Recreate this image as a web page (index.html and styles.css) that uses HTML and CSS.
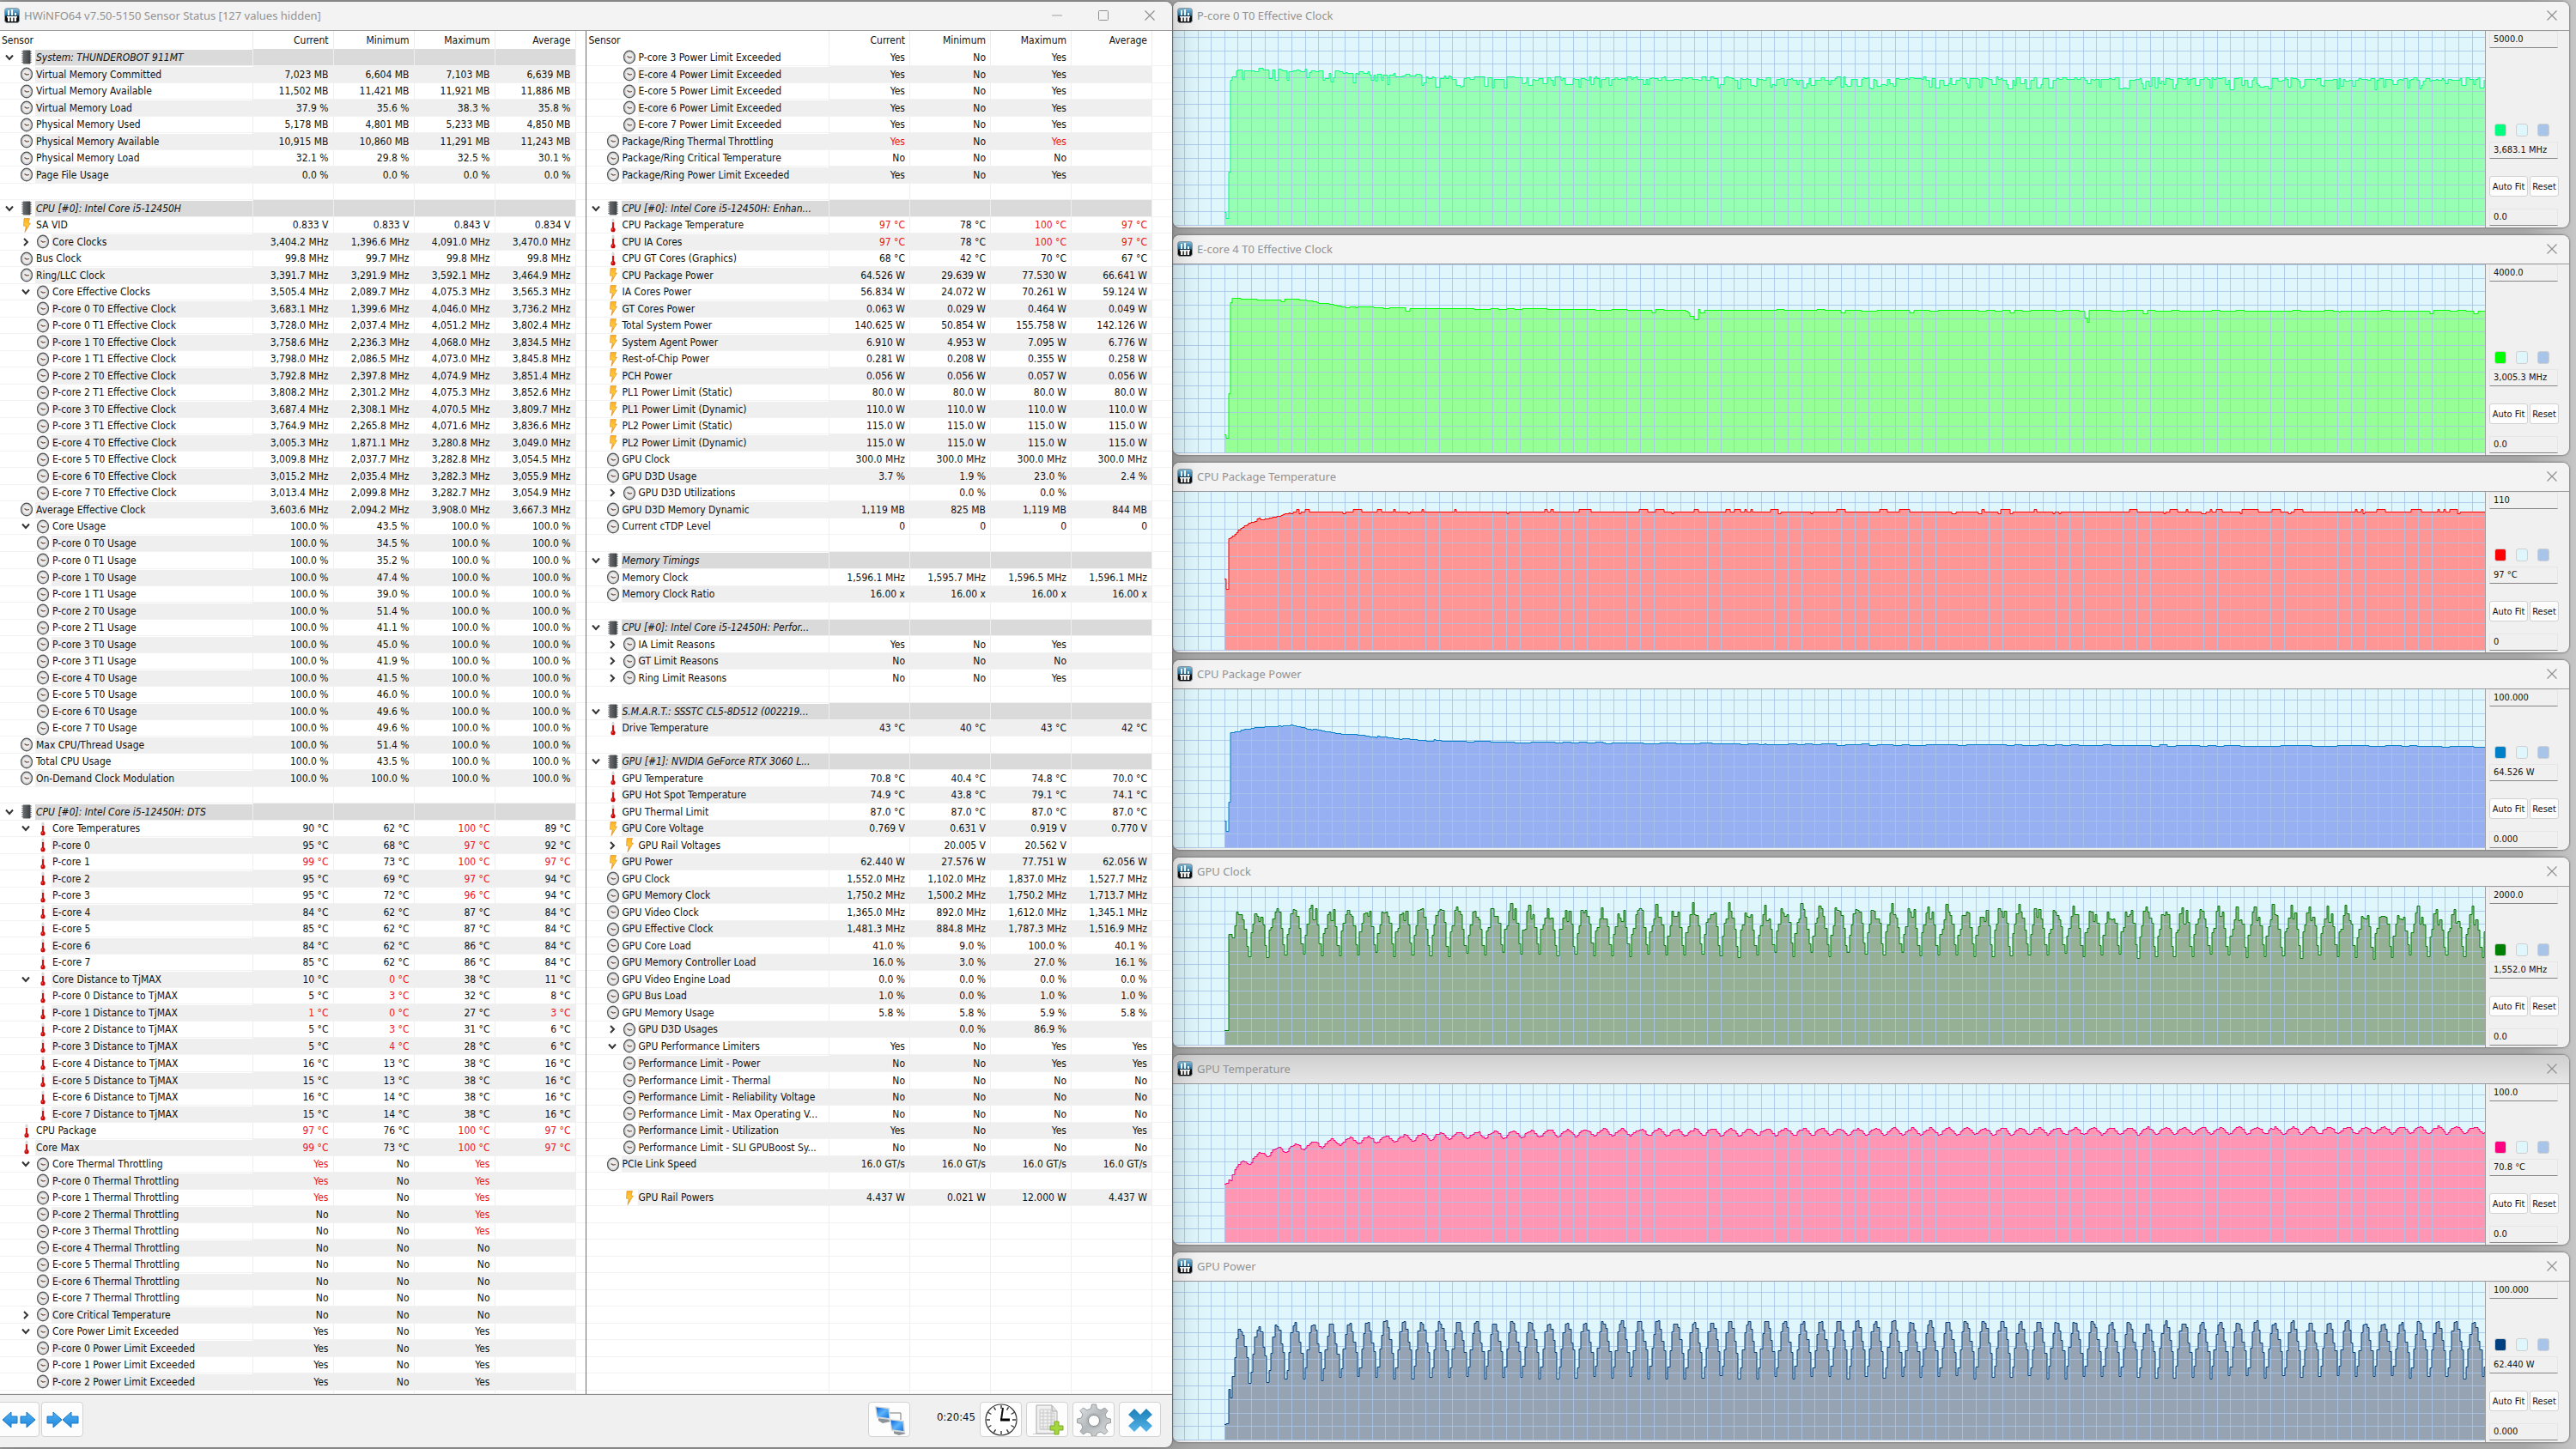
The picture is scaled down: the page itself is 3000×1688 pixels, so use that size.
FILE: index.html
```html
<!DOCTYPE html>
<html lang="en">
<head>
<meta charset="utf-8">
<title>HWiNFO64 Sensor Status</title>
<link rel="stylesheet" href="styles.css">
</head>
<body>
<svg class="defs" aria-hidden="true">
  <defs>
    <linearGradient id="gBlue" x1="0" y1="0" x2="0" y2="1"><stop offset="0" stop-color="#8cc4e0"/><stop offset=".5" stop-color="#1a6fa5"/><stop offset=".55" stop-color="#111"/><stop offset="1" stop-color="#000"/></linearGradient>
    <linearGradient id="gBolt" x1="0" y1="0" x2="0" y2="1"><stop offset="0" stop-color="#ffb020"/><stop offset=".5" stop-color="#ffc93a"/><stop offset="1" stop-color="#f08a10"/></linearGradient>
    <linearGradient id="gArrow" x1="0" y1="0" x2="0" y2="1"><stop offset="0" stop-color="#4fb0f2"/><stop offset="1" stop-color="#1f86dc"/></linearGradient>
    <linearGradient id="gScreen" x1="0" y1="0" x2="1" y2="1"><stop offset="0" stop-color="#0a62d8"/><stop offset=".5" stop-color="#5db4fa"/><stop offset="1" stop-color="#1273e0"/></linearGradient>
    <linearGradient id="gGear" x1="0" y1="0" x2="1" y2="1"><stop offset="0" stop-color="#e2e5e6"/><stop offset=".5" stop-color="#b4b9bb"/><stop offset="1" stop-color="#d9dcdd"/></linearGradient>
    <linearGradient id="gCross" x1="0" y1="0" x2="0" y2="1"><stop offset="0" stop-color="#1c7fb8"/><stop offset="1" stop-color="#56b4e8"/></linearGradient>
    <linearGradient id="gChip" x1="0" y1="0" x2="1" y2="0"><stop offset="0" stop-color="#6a6e70"/><stop offset="1" stop-color="#3c4042"/></linearGradient>
  </defs>
  <symbol id="app" viewBox="0 0 18 18"><rect x=".5" y=".5" width="17" height="17" rx="3" fill="url(#gBlue)" stroke="#8a98a0"/><path d="M4 3h2v6H4zM8 2h2v7H8zM12 6h2v3h-2z" fill="#fff"/><path d="M4 11h2.500v5H4zM7.800 11h2.500v5H7.800zM11.600 11h2.500v5h-2.500zM3 10h12v1.500H3z" fill="#fff"/></symbol>
  <symbol id="clock" viewBox="0 0 16 16"><ellipse cx="8" cy="8" rx="6.400" ry="7.200" fill="#ececec" stroke="#55585a" stroke-width="1.400"/><ellipse cx="8" cy="8" rx="4.900" ry="5.700" fill="none" stroke="#c8c8c8"/><path d="M5.500 7l2.500 1.500L11 8" fill="none" stroke="#6a4a3a" stroke-width="1.200"/></symbol>
  <symbol id="chip" viewBox="0 0 16 16"><path d="M2 1.500h12M2 4h12M2 6.500h12M2 9h12M2 11.500h12M2 14h12" stroke="#8a8d8f"/><rect x="3.500" y="0" width="9" height="16" rx="1" fill="url(#gChip)"/></symbol>
  <symbol id="thermo" viewBox="0 0 16 16"><path d="M8 1.500v10" stroke="#d8d8d8" stroke-width="3" stroke-linecap="round"/><path d="M8 4.500v8" stroke="#d41414" stroke-width="2"/><circle cx="8" cy="13.200" r="2.600" fill="#c80c0c"/><circle cx="7.300" cy="12.500" r=".7" fill="#f08080"/></symbol>
  <symbol id="bolt" viewBox="0 0 16 16"><path d="M5 0h6.500L10 5.500h2.500L6 16l1.300-7.300H4.500z" fill="url(#gBolt)" stroke="#d88a20" stroke-width=".6"/></symbol>
  <symbol id="down" viewBox="0 0 10 10"><path d="M1 2.500l4 4.500 4-4.500" fill="none" stroke="#333" stroke-width="2"/></symbol>
  <symbol id="right" viewBox="0 0 10 10"><path d="M3 1l4 4-4 4" fill="none" stroke="#333" stroke-width="2"/></symbol>
  <symbol id="close" viewBox="0 0 12 12"><path d="M.5 .5l11 11M11.500 .5l-11 11" stroke="#909090" stroke-width="1.200"/></symbol>
</svg>
<div class="desktop">
  <main class="window sensors">
    <header class="titlebar">
      <svg class="app-icon" aria-hidden="true"><use href="#app"/></svg>
      <h1 class="title">HWiNFO64 v7.50-5150 Sensor Status [127 values hidden]</h1>
      <div class="window-controls">
        <button class="control" aria-label="Minimize"><svg viewBox="0 0 12 12"><path d="M0 6h12" stroke="#a0a0a0"/></svg></button>
        <button class="control" aria-label="Maximize"><svg viewBox="0 0 12 12"><rect x=".5" y=".5" width="11" height="11" rx="1" fill="none" stroke="#909090"/></svg></button>
        <button class="control" aria-label="Close"><svg><use href="#close"/></svg></button>
      </div>
    </header>
    <div class="panes">
      <table class="readings">
        <colgroup><col><col class="value-col"><col class="value-col"><col class="value-col"><col class="value-col"><col class="edge-col"></colgroup>
        <thead><tr><th scope="col">Sensor</th><th scope="col">Current</th><th scope="col">Minimum</th><th scope="col">Maximum</th><th scope="col">Average</th><td></td></tr></thead>
        <tbody id="left-rows"></tbody>
      </table>
      <table class="readings">
        <colgroup><col><col class="value-col"><col class="value-col"><col class="value-col"><col class="value-col"><col class="edge-col edge-col-wide"></colgroup>
        <thead><tr><th scope="col">Sensor</th><th scope="col">Current</th><th scope="col">Minimum</th><th scope="col">Maximum</th><th scope="col">Average</th><td></td></tr></thead>
        <tbody id="right-rows"></tbody>
      </table>
    </div>
    <footer class="toolbar">
      <div class="tool-group tool-group-start">
        <button class="tool" aria-label="Expand columns"><svg viewBox="0 0 40 36"><path d="M1 18l10-9v5h7v8h-7v5zM39 18l-10-9v5h-7v8h7v5z" fill="url(#gArrow)" stroke="#1c78c4"/></svg></button>
        <button class="tool" aria-label="Shrink columns"><svg viewBox="0 0 40 36"><path d="M19 18l-10-9v5H2v8h7v5zM20 18l10-9v5h8v8h-8v5z" fill="url(#gArrow)" stroke="#1c78c4"/></svg></button>
      </div>
      <div class="tool-group">
        <button class="tool tool-network" aria-label="Remote sensors"><svg viewBox="0 0 40 36"><path d="M20 10h13v8" fill="none" stroke="#777"/><path d="M7 16l11 1 3 3-9 2-5-3z" fill="#8d9499"/><path d="M3 2l17 2 1 14-16-2z" fill="#d4d8da"/><path d="M4.500 3.500l14 1.700.8 10.800-13.300-1.700z" fill="url(#gScreen)"/><path d="M25 31l10 1 4 2-8 2-6-2z" fill="#8d9499"/><path d="M20 17l17 2 1 14-16-2z" fill="#d4d8da"/><path d="M21.500 18.500l14 1.700.8 10.800-13.300-1.700z" fill="url(#gScreen)"/></svg></button>
        <time class="elapsed">0:20:45</time>
        <button class="tool" aria-label="Reset clock"><svg viewBox="0 0 40 38"><circle cx="20" cy="19" r="18" fill="#fff" stroke="#333" stroke-width="1.200"/><path d="M20 2v4M20 32v4M3 19h4M33 19h4M28.500 4.300l-2 3.400M35 10.500l-3.400 2M35 27.500l-3.400-2M28.500 33.700l-2-3.400M11.500 33.700l2-3.400M5 27.500l3.400-2M5 10.500l3.400 2M11.500 4.300l2 3.400" stroke="#333" stroke-width="1.400"/><path d="M20 19l2-14" stroke="#111" stroke-width="2"/><path d="M19 19h11" stroke="#000" stroke-width="3"/></svg></button>
        <button class="tool" aria-label="Log to file"><svg viewBox="0 0 40 38"><path d="M3 35h30v1H3z" fill="#ccc"/><path d="M7 2h18l6 7v26H7z" fill="#f0f0f0" stroke="#aaa"/><path d="M25 2v7h6" fill="#ddd" stroke="#aaa"/><path d="M11 7h13v23H11zM11 11h17v19H11M11 15h17M11 19h17M11 23h17M11 27h17M15 7v23M20 7v23M25 11v19" fill="none" stroke="#c9c9c9"/><path d="M28 21h5v5h5v5h-5v5h-5v-5h-5v-5h5z" fill="#a4d63e" stroke="#7dac22"/></svg></button>
        <button class="tool" aria-label="Settings"><svg viewBox="0 0 40 38"><path d="M17.500 1h5l1 5 4.500 1.800L32.500 5 36 8.500 33 13l1.800 4 4.700 1v4.500l-4.700 1L33 28l3 4.500-3.500 3.500-4.500-3-4.500 1.500-1 3.500h-5l-1-3.500L12 33l-4.500 3L4 32.500 7 28l-1.800-4.500-4.700-1V18l4.700-1L7 13 4 8.500 7.500 5 12 7.800 16.500 6z" fill="url(#gGear)" stroke="#989c9e"/><circle cx="20" cy="20" r="9" fill="#b0b4b6"/><circle cx="20" cy="20" r="6.500" fill="#fff" stroke="#84888a"/></svg></button>
        <button class="tool" aria-label="Close sensors"><svg viewBox="0 0 40 38"><path d="M13 6l7 7 7-7 7 7-7 6.500 7 6.500-7 7-7-7-7 7-7-7 7-6.500L6 13z" fill="url(#gCross)"/></svg></button>
      </div>
    </footer>
  </main>
  <div class="graphs" id="graphs"></div>
</div>
<script src="sensors.js"></script>
</body>
</html>
```
FILE: styles.css
```css
* { box-sizing: border-box; }

body {
  margin: 0;
  background: linear-gradient(90deg, #a6a6a6 98%, #c6c6c6);
  color: #111;
  font-family: "DejaVu Sans Condensed", Tahoma, sans-serif;
  font-size: 12px;
}

button, input { font: inherit; color: inherit; margin: 0; padding: 0; }
.defs { position: absolute; width: 0; height: 0; }

.desktop {
  display: grid;
  grid-template-columns: 1366fr 1625fr;
  gap: 1px;
  min-height: 100vh;
  padding: 2px 8px 2px 0;
}

.window {
  display: flex;
  flex-direction: column;
  overflow: hidden;
  border-radius: 0 8px 8px 8px;
  background: #f0f0f0;
}
.sensors {
  position: relative;
  z-index: 1;
  border-radius: 0 8px 8px 0;
  box-shadow: 0 0 3px #555, 0 0 36px rgba(0, 0, 0, .25);
}

.titlebar {
  display: flex;
  align-items: center;
  flex: none;
  height: 34px;
  padding: 0 20px 2px 5px;
  border-bottom: 1px solid #9a9a9e;
  background: #f3f3f3;
}
.app-icon { width: 18px; height: 18px; }
.title {
  flex: 1;
  margin: 0 0 0 5px;
  color: #929292;
  font: 400 13px/20px "Noto Sans", "Segoe UI", sans-serif;
}
.window-controls { display: flex; gap: 42px; }
.control { width: 12px; height: 12px; border: 0; background: none; display: flex; }
.control svg { width: 12px; height: 12px; }

.panes {
  display: grid;
  grid-template-columns: 682fr 684fr;
  flex: 1;
  align-items: start;
  background: #fff;
}
.readings {
  width: 100%;
  table-layout: fixed;
  border-collapse: separate;
  border-spacing: 0;
  line-height: 18px;
  white-space: nowrap;
}
.readings + .readings { border-left: 1px solid #6e6e6e; }
.value-col { width: 94px; }
.edge-col { width: 11px; }
.edge-col-wide { width: 23px; }
.readings th {
  height: 21px;
  padding: 1px 5px 0 0;
  border-right: 1px solid #ececec;
  font-weight: 400;
  text-align: right;
}
.readings th:first-child { padding-left: 2px; text-align: left; }
.readings thead td { padding: 0; }
.readings + .readings th:first-child { padding-left: 3px; }

.readings tbody tr { height: 19px; }
.readings tbody tr:nth-child(2n), .readings tbody tr:nth-child(30n+1) { height: 20px; }
.readings tbody tr.stub { height: 4px; }
.readings tbody td {
  padding: 0 5px 0 0;
  border-right: 1px solid #efefef;
  border-bottom: 1px solid #f2f2f2;
  text-align: right;
}
.readings tbody td:last-child { border-right: 0; }
.readings tbody .name-cell { padding: 0; text-align: left; }
.name { display: flex; align-items: center; height: 18px; }
.name-nested { padding-left: 19px; }
.toggle, .toggle-space { flex: none; width: 23px; padding-left: 6px; }
.toggle { border: 0; background: none; display: flex; }
.toggle svg { width: 10px; height: 10px; }
.kind { flex: none; width: 16px; height: 17px; margin-right: 2px; }
.label { flex: 1; height: 100%; padding-left: 1px; }
.shaded .label, .shaded .value { background: #efefef; }
.group .label, .group .value { background: #dadada; }
.group .label { font-style: italic; }
.hot { color: #f01414; }

.toolbar {
  display: flex;
  justify-content: space-between;
  flex: none;
  height: 62px;
  padding: 8px 13px 0 0;
  border-top: 1px solid #8c8c8c;
}
.tool-group { display: flex; gap: 5px; }
.tool-group-start { gap: 2px; margin-left: -3px; }
.tool {
  display: flex;
  justify-content: center;
  align-items: center;
  width: 49px;
  height: 41px;
  border: 1px solid #d2d2d2;
  border-radius: 4px;
  background: #fdfdfd;
}
.tool svg { width: 40px; height: 38px; }
.tool-network { margin-right: 24px; }
.elapsed { width: 47px; font-size: 13px; line-height: 35px; text-align: right; }

.graphs { display: flex; flex-direction: column; gap: 9px; }
.graph { border-radius: 8px; box-shadow: 0 0 2px 1px #808080; }
.graph .titlebar { padding-right: 14px; }
.graph-body { display: flex; height: 187px; }
.graph-tall .graph-body { height: 229px; }
.graph-medium .graph-body { height: 222px; }
.graph-dim .titlebar { background: linear-gradient(#cfcfcf, #e6e6e6); }
.plot { flex: 1; min-width: 0; height: 100%; border-right: 1px solid #a0a0a0; }
.plot-back { fill: #dff6fd; }
.plot-grid { fill: none; stroke: #a8c4e8; stroke-width: 1; opacity: .85; }
.plot-line { fill: none; stroke-width: 1; }

.scale {
  display: flex;
  flex-direction: column;
  flex: none;
  width: 97px;
  padding: 0 11px 2px 4px;
  font-size: 11px;
}
.field {
  width: 80px;
  height: 20px;
  padding: 0 0 2px 4px;
  border: 1px solid #e6e6e6;
  border-bottom: 1px solid #868686;
  background: #f0f0f0;
}
.swatches { display: flex; gap: 11px; margin: auto 0 6px 6px; }
.swatch { width: 14px; height: 15px; border: 1px solid #d0d0d0; border-radius: 3px; }
.fit-row { display: flex; gap: 2px; margin: 20px 0 14px; }
.fit { width: 45px; height: 24px; border: 1px solid #d2d2d2; border-radius: 3px; background: #fdfdfd; }
.fit-reset { width: 34px; }
```
FILE: sensors.js
```js
// Row format: level, icon, toggle, then name|current|minimum|maximum|average.
// A "!" before a value marks it as out of range.
const KINDS = { c: 'clock', t: 'thermo', b: 'bolt', h: 'chip' };
const LEFT = `
0hv System: THUNDEROBOT 911MT
0c- Virtual Memory Committed|7,023 MB|6,604 MB|7,103 MB|6,639 MB
0c- Virtual Memory Available|11,502 MB|11,421 MB|11,921 MB|11,886 MB
0c- Virtual Memory Load|37.9 %|35.6 %|38.3 %|35.8 %
0c- Physical Memory Used|5,178 MB|4,801 MB|5,233 MB|4,850 MB
0c- Physical Memory Available|10,915 MB|10,860 MB|11,291 MB|11,243 MB
0c- Physical Memory Load|32.1 %|29.8 %|32.5 %|30.1 %
0c- Page File Usage|0.0 %|0.0 %|0.0 %|0.0 %
~
0hv CPU [#0]: Intel Core i5-12450H
0b- SA VID|0.833 V|0.833 V|0.843 V|0.834 V
1c> Core Clocks|3,404.2 MHz|1,396.6 MHz|4,091.0 MHz|3,470.0 MHz
0c- Bus Clock|99.8 MHz|99.7 MHz|99.8 MHz|99.8 MHz
0c- Ring/LLC Clock|3,391.7 MHz|3,291.9 MHz|3,592.1 MHz|3,464.9 MHz
1cv Core Effective Clocks|3,505.4 MHz|2,089.7 MHz|4,075.3 MHz|3,565.3 MHz
1c- P-core 0 T0 Effective Clock|3,683.1 MHz|1,399.6 MHz|4,046.0 MHz|3,736.2 MHz
1c- P-core 0 T1 Effective Clock|3,728.0 MHz|2,037.4 MHz|4,051.2 MHz|3,802.4 MHz
1c- P-core 1 T0 Effective Clock|3,758.6 MHz|2,236.3 MHz|4,068.0 MHz|3,834.5 MHz
1c- P-core 1 T1 Effective Clock|3,798.0 MHz|2,086.5 MHz|4,073.0 MHz|3,845.8 MHz
1c- P-core 2 T0 Effective Clock|3,792.8 MHz|2,397.8 MHz|4,074.9 MHz|3,851.4 MHz
1c- P-core 2 T1 Effective Clock|3,808.2 MHz|2,301.2 MHz|4,075.3 MHz|3,852.6 MHz
1c- P-core 3 T0 Effective Clock|3,687.4 MHz|2,308.1 MHz|4,070.5 MHz|3,809.7 MHz
1c- P-core 3 T1 Effective Clock|3,764.9 MHz|2,265.8 MHz|4,071.6 MHz|3,836.6 MHz
1c- E-core 4 T0 Effective Clock|3,005.3 MHz|1,871.1 MHz|3,280.8 MHz|3,049.0 MHz
1c- E-core 5 T0 Effective Clock|3,009.8 MHz|2,037.7 MHz|3,282.8 MHz|3,054.5 MHz
1c- E-core 6 T0 Effective Clock|3,015.2 MHz|2,035.4 MHz|3,282.3 MHz|3,055.9 MHz
1c- E-core 7 T0 Effective Clock|3,013.4 MHz|2,099.8 MHz|3,282.7 MHz|3,054.9 MHz
0c- Average Effective Clock|3,603.6 MHz|2,094.2 MHz|3,908.0 MHz|3,667.3 MHz
1cv Core Usage|100.0 %|43.5 %|100.0 %|100.0 %
1c- P-core 0 T0 Usage|100.0 %|34.5 %|100.0 %|100.0 %
1c- P-core 0 T1 Usage|100.0 %|35.2 %|100.0 %|100.0 %
1c- P-core 1 T0 Usage|100.0 %|47.4 %|100.0 %|100.0 %
1c- P-core 1 T1 Usage|100.0 %|39.0 %|100.0 %|100.0 %
1c- P-core 2 T0 Usage|100.0 %|51.4 %|100.0 %|100.0 %
1c- P-core 2 T1 Usage|100.0 %|41.1 %|100.0 %|100.0 %
1c- P-core 3 T0 Usage|100.0 %|45.0 %|100.0 %|100.0 %
1c- P-core 3 T1 Usage|100.0 %|41.9 %|100.0 %|100.0 %
1c- E-core 4 T0 Usage|100.0 %|41.5 %|100.0 %|100.0 %
1c- E-core 5 T0 Usage|100.0 %|46.0 %|100.0 %|100.0 %
1c- E-core 6 T0 Usage|100.0 %|49.6 %|100.0 %|100.0 %
1c- E-core 7 T0 Usage|100.0 %|49.6 %|100.0 %|100.0 %
0c- Max CPU/Thread Usage|100.0 %|51.4 %|100.0 %|100.0 %
0c- Total CPU Usage|100.0 %|43.5 %|100.0 %|100.0 %
0c- On-Demand Clock Modulation|100.0 %|100.0 %|100.0 %|100.0 %
~
0hv CPU [#0]: Intel Core i5-12450H: DTS
1tv Core Temperatures|90 °C|62 °C|!100 °C|89 °C
1t- P-core 0|95 °C|68 °C|!97 °C|92 °C
1t- P-core 1|!99 °C|73 °C|!100 °C|!97 °C
1t- P-core 2|95 °C|69 °C|!97 °C|94 °C
1t- P-core 3|95 °C|72 °C|!96 °C|94 °C
1t- E-core 4|84 °C|62 °C|87 °C|84 °C
1t- E-core 5|85 °C|62 °C|87 °C|84 °C
1t- E-core 6|84 °C|62 °C|86 °C|84 °C
1t- E-core 7|85 °C|62 °C|86 °C|84 °C
1tv Core Distance to TjMAX|10 °C|!0 °C|38 °C|11 °C
1t- P-core 0 Distance to TjMAX|5 °C|!3 °C|32 °C|8 °C
1t- P-core 1 Distance to TjMAX|!1 °C|!0 °C|27 °C|!3 °C
1t- P-core 2 Distance to TjMAX|5 °C|!3 °C|31 °C|6 °C
1t- P-core 3 Distance to TjMAX|5 °C|!4 °C|28 °C|6 °C
1t- E-core 4 Distance to TjMAX|16 °C|13 °C|38 °C|16 °C
1t- E-core 5 Distance to TjMAX|15 °C|13 °C|38 °C|16 °C
1t- E-core 6 Distance to TjMAX|16 °C|14 °C|38 °C|16 °C
1t- E-core 7 Distance to TjMAX|15 °C|14 °C|38 °C|16 °C
0t- CPU Package|!97 °C|76 °C|!100 °C|!97 °C
0t- Core Max|!99 °C|73 °C|!100 °C|!97 °C
1cv Core Thermal Throttling|!Yes|No|!Yes|
1c- P-core 0 Thermal Throttling|!Yes|No|!Yes|
1c- P-core 1 Thermal Throttling|!Yes|No|!Yes|
1c- P-core 2 Thermal Throttling|No|No|!Yes|
1c- P-core 3 Thermal Throttling|No|No|!Yes|
1c- E-core 4 Thermal Throttling|No|No|No|
1c- E-core 5 Thermal Throttling|No|No|No|
1c- E-core 6 Thermal Throttling|No|No|No|
1c- E-core 7 Thermal Throttling|No|No|No|
1c> Core Critical Temperature|No|No|No|
1cv Core Power Limit Exceeded|Yes|No|Yes|
1c- P-core 0 Power Limit Exceeded|Yes|No|Yes|
1c- P-core 1 Power Limit Exceeded|Yes|No|Yes|
1c- P-core 2 Power Limit Exceeded|Yes|No|Yes|`;
const RIGHT = `
1c- P-core 3 Power Limit Exceeded|Yes|No|Yes|
1c- E-core 4 Power Limit Exceeded|Yes|No|Yes|
1c- E-core 5 Power Limit Exceeded|Yes|No|Yes|
1c- E-core 6 Power Limit Exceeded|Yes|No|Yes|
1c- E-core 7 Power Limit Exceeded|Yes|No|Yes|
0c- Package/Ring Thermal Throttling|!Yes|No|!Yes|
0c- Package/Ring Critical Temperature|No|No|No|
0c- Package/Ring Power Limit Exceeded|Yes|No|Yes|
~
0hv CPU [#0]: Intel Core i5-12450H: Enhan...
0t- CPU Package Temperature|!97 °C|78 °C|!100 °C|!97 °C
0t- CPU IA Cores|!97 °C|78 °C|!100 °C|!97 °C
0t- CPU GT Cores (Graphics)|68 °C|42 °C|70 °C|67 °C
0b- CPU Package Power|64.526 W|29.639 W|77.530 W|66.641 W
0b- IA Cores Power|56.834 W|24.072 W|70.261 W|59.124 W
0b- GT Cores Power|0.063 W|0.029 W|0.464 W|0.049 W
0b- Total System Power|140.625 W|50.854 W|155.758 W|142.126 W
0b- System Agent Power|6.910 W|4.953 W|7.095 W|6.776 W
0b- Rest-of-Chip Power|0.281 W|0.208 W|0.355 W|0.258 W
0b- PCH Power|0.056 W|0.056 W|0.057 W|0.056 W
0b- PL1 Power Limit (Static)|80.0 W|80.0 W|80.0 W|80.0 W
0b- PL1 Power Limit (Dynamic)|110.0 W|110.0 W|110.0 W|110.0 W
0b- PL2 Power Limit (Static)|115.0 W|115.0 W|115.0 W|115.0 W
0b- PL2 Power Limit (Dynamic)|115.0 W|115.0 W|115.0 W|115.0 W
0c- GPU Clock|300.0 MHz|300.0 MHz|300.0 MHz|300.0 MHz
0c- GPU D3D Usage|3.7 %|1.9 %|23.0 %|2.4 %
1c> GPU D3D Utilizations||0.0 %|0.0 %|
0c- GPU D3D Memory Dynamic|1,119 MB|825 MB|1,119 MB|844 MB
0c- Current cTDP Level|0|0|0|0
~
0hv Memory Timings
0c- Memory Clock|1,596.1 MHz|1,595.7 MHz|1,596.5 MHz|1,596.1 MHz
0c- Memory Clock Ratio|16.00 x|16.00 x|16.00 x|16.00 x
~
0hv CPU [#0]: Intel Core i5-12450H: Perfor...
1c> IA Limit Reasons|Yes|No|Yes|
1c> GT Limit Reasons|No|No|No|
1c> Ring Limit Reasons|No|No|Yes|
~
0hv S.M.A.R.T.: SSSTC CL5-8D512 (002219...
0t- Drive Temperature|43 °C|40 °C|43 °C|42 °C
~
0hv GPU [#1]: NVIDIA GeForce RTX 3060 L...
0t- GPU Temperature|70.8 °C|40.4 °C|74.8 °C|70.0 °C
0t- GPU Hot Spot Temperature|74.9 °C|43.8 °C|79.1 °C|74.1 °C
0t- GPU Thermal Limit|87.0 °C|87.0 °C|87.0 °C|87.0 °C
0b- GPU Core Voltage|0.769 V|0.631 V|0.919 V|0.770 V
1b> GPU Rail Voltages||20.005 V|20.562 V|
0b- GPU Power|62.440 W|27.576 W|77.751 W|62.056 W
0c- GPU Clock|1,552.0 MHz|1,102.0 MHz|1,837.0 MHz|1,527.7 MHz
0c- GPU Memory Clock|1,750.2 MHz|1,500.2 MHz|1,750.2 MHz|1,713.7 MHz
0c- GPU Video Clock|1,365.0 MHz|892.0 MHz|1,612.0 MHz|1,345.1 MHz
0c- GPU Effective Clock|1,481.3 MHz|884.8 MHz|1,787.3 MHz|1,516.9 MHz
0c- GPU Core Load|41.0 %|9.0 %|100.0 %|40.1 %
0c- GPU Memory Controller Load|16.0 %|3.0 %|27.0 %|16.1 %
0c- GPU Video Engine Load|0.0 %|0.0 %|0.0 %|0.0 %
0c- GPU Bus Load|1.0 %|0.0 %|1.0 %|1.0 %
0c- GPU Memory Usage|5.8 %|5.8 %|5.9 %|5.8 %
1c> GPU D3D Usages||0.0 %|86.9 %|
1cv GPU Performance Limiters|Yes|No|Yes|Yes
1c- Performance Limit - Power|No|No|Yes|Yes
1c- Performance Limit - Thermal|No|No|No|No
1c- Performance Limit - Reliability Voltage|No|No|No|No
1c- Performance Limit - Max Operating V...|No|No|No|No
1c- Performance Limit - Utilization|Yes|No|Yes|Yes
1c- Performance Limit - SLI GPUBoost Sy...|No|No|No|No
0c- PCIe Link Speed|16.0 GT/s|16.0 GT/s|16.0 GT/s|16.0 GT/s
~
1b- GPU Rail Powers|4.437 W|0.021 W|12.000 W|4.437 W`;

function rowHtml(line, shaded) {
  if (!line || line === '~') return '<tr>' + '<td></td>'.repeat(6) + '</tr>';
  const [level, kind, toggle] = line;
  const [name, ...values] = line.slice(4).split('|');
  while (values.length < 4) values.push('');
  const arrow = toggle === '-' ? '<span class="toggle-space"></span>'
    : `<button class="toggle" aria-label="Toggle ${name}"><svg><use href="#${toggle === 'v' ? 'down' : 'right'}"/></svg></button>`;
  const cells = values.map(v => `<td class="value${v[0] === '!' ? ' hot' : ''}">${v.replace('!', '')}</td>`).join('');
  const cls = kind === 'h' ? 'group' : shaded ? 'shaded' : '';
  return `<tr class="${cls}"><td class="name-cell"><div class="name${level === '1' ? ' name-nested' : ''}">${arrow}` +
    `<svg class="kind"><use href="#${KINDS[kind]}"/></svg><span class="label">${name}</span></div></td>${cells}<td></td></tr>`;
}

function fillTable(id, text, flip) {
  const lines = text.trim().split('\n');
  while (lines.length < 80) lines.push('');
  document.getElementById(id).innerHTML =
    lines.map((line, i) => rowHtml(line, (i + (i >= flip ? 1 : 0)) % 2 === 1)).join('') +
    '<tr class="stub">' + '<td></td>'.repeat(6) + '</tr>';
}
fillTable('left-rows', LEFT, 999);
fillTable('right-rows', RIGHT, 29);

// Graph histories: one value per sample, as pixels above the baseline.
const SAMPLES = 626;
const STEP = 2.347;
const START = 60;
const WIDTH = 1528;

function randomizer(seed) {
  return () => (seed = (seed * 16807) % 2147483647) / 2147483647;
}
// Straight-line interpolation through [sample, value] knots.
function trend(knots, i) {
  let k = 1;
  while (k < knots.length - 1 && knots[k][0] < i) k++;
  const [x0, y0] = knots[k - 1], [x1, y1] = knots[k];
  return y0 + (y1 - y0) * Math.min(1, Math.max(0, (i - x0) / (x1 - x0)));
}
function noisy(head, knots, noise, seed, events = {}) {
  const rnd = randomizer(seed);
  const out = [...head];
  let hold = 0, depth = 0;
  while (out.length < SAMPLES) {
    const i = out.length;
    if (hold-- <= 0) { [depth, hold] = noise(rnd); }
    out.push(trend(knots, i) + depth - (events[i] || 0));
  }
  return out;
}
function waves(head, peaks, shape, jitter, seed) {
  const rnd = randomizer(seed);
  const out = [...head];
  while (out.length < SAMPLES) {
    const i = out.length, p = (i + 5) % 9;
    out.push(trend(peaks, i) - shape[p] + (rnd() - .5) * jitter[p]);
  }
  return out;
}

const GRAPHS = [
  { title: 'P-core 0 T0 Effective Clock', size: 'tall', max: '5000.0', now: '3,683.1 MHz', min: '0.0', line: '#00ff80', fill: '#96ffb3', height: 229,
    data: noisy([16, 9, 63, 170], [[4, 181], [45, 180], [110, 172], [180, 171], [625, 170]],
      r => r() < .28 ? [-4 - r() * 7, r() < .3 ? 1 : 0] : [r() * 4 - 1, r() < .5 ? 1 : 0], 4177) },
  { title: 'E-core 4 T0 Effective Clock', size: 'medium', max: '4000.0', now: '3,005.3 MHz', min: '0.0', line: '#00ff00', fill: '#96ff96', height: 222,
    data: noisy([22, 18, 70, 176], [[4, 180], [35, 180], [60, 171], [100, 169], [240, 167], [625, 166]],
      r => r() < .06 ? [-3, 1] : [r() * 1.4 - .7, 3], 9921, { 231: 4, 232: 8, 233: 12, 234: 12, 427: 8, 428: 14 }) },
  { title: 'CPU Package Temperature', max: '110', now: '97 °C', min: '0', line: '#ff0000', fill: '#ff9696', height: 187,
    data: noisy([84, 72, 131, 132, 134, 136, 138], [[7, 141], [12, 149], [20, 154], [28, 158], [33, 162], [625, 162]],
      r => r() < .25 ? [3, r() < .3 ? 3 : 0] : r() < .15 ? [-2, 0] : [0, r() < .2 ? 6 : 1], 38113) },
  { title: 'CPU Package Power', max: '100.000', now: '64.526 W', min: '0.000', line: '#0080c8', fill: '#96b0f2', height: 187,
    data: noisy([32, 20, 54, 135], [[4, 136], [15, 140], [33, 143], [55, 134], [90, 127], [130, 124], [300, 121], [625, 119]],
      r => [r() * 1.6 - .8, 3], 13) },
  { title: 'GPU Clock', max: '2000.0', now: '1,552.0 MHz', min: '0.0', line: '#008000', fill: '#96b096', height: 187,
    data: waves([18, 18, 130, 130], [[0, 162], [30, 164], [300, 164], [625, 162]],
      [32, 24, 10, 6, 12, 10, 24, 46, 58], [8, 8, 14, 18, 18, 14, 10, 4, 6], 5) },
  { title: 'GPU Temperature', dim: true, max: '100.0', now: '70.8 °C', min: '0.0', line: '#ff0080', fill: '#ff96b3', height: 187,
    data: waves([69, 70, 74, 73, 80], [[5, 90], [10, 98], [20, 109], [35, 116], [60, 123], [110, 129], [180, 133], [625, 136]],
      [7, 4, 2, 1, 0, 1, 3, 6, 8], [1, 1, 1, 2, 2, 2, 1, 1, 1], 3) },
  { title: 'GPU Power', max: '100.000', now: '62.440 W', min: '0.000', line: '#004080', fill: '#96a3b3', height: 187,
    data: waves([19, 20, 60, 50], [[0, 129], [25, 137], [80, 140], [625, 140]],
      [54, 33, 14, 3, 2, 10, 24, 36, 66], [3, 4, 5, 5, 5, 5, 5, 4, 5], 17) },
];

function plotSvg(g) {
  const h = g.height - 2;
  let grid = '';
  for (let k = 0; k < 98; k++) grid += `M${Math.round(13 + k * 15.62) + .5} 0V${h}`;
  for (let k = 0; h - k * 15.63 > 0; k++) grid += `M0 ${Math.round(h - k * 15.63) - .5}H${WIDTH}`;
  let line = '';
  g.data.forEach((v, i) => {
    const y = Math.round(h - v) + .5;
    const x = Math.round(START + i * STEP);
    line += i ? `H${x}V${y}` : `M${x} ${y}`;
  });
  line += `H${WIDTH}`;
  return `<svg class="plot" viewBox="0 0 ${WIDTH} ${g.height}" preserveAspectRatio="none" role="img" aria-label="${g.title} history">` +
    `<rect class="plot-back" width="${WIDTH}" height="${h}"/>` +
    `<path d="${line}V${h}H${START}z" fill="${g.fill}"/><path class="plot-grid" d="${grid}"/>` +
    `<path class="plot-line" d="${line}" stroke="${g.line}"/></svg>`;
}

document.getElementById('graphs').innerHTML = GRAPHS.map(g => `
<section class="window graph${g.size ? ' graph-' + g.size : ''}${g.dim ? ' graph-dim' : ''}">
  <header class="titlebar">
    <svg class="app-icon" aria-hidden="true"><use href="#app"/></svg>
    <h2 class="title">${g.title}</h2>
    <button class="control" aria-label="Close ${g.title}"><svg><use href="#close"/></svg></button>
  </header>
  <div class="graph-body">
    ${plotSvg(g)}
    <div class="scale">
      <input class="field" aria-label="Scale maximum" value="${g.max}">
      <div class="swatches">
        <button class="swatch" aria-label="Line colour" style="background:${g.line}"></button>
        <button class="swatch" aria-label="Background colour" style="background:#dff6fd"></button>
        <button class="swatch" aria-label="Grid colour" style="background:#a8c4e8"></button>
      </div>
      <input class="field" aria-label="Current value" value="${g.now}" readonly>
      <div class="fit-row"><button class="fit">Auto Fit</button><button class="fit fit-reset">Reset</button></div>
      <input class="field" aria-label="Scale minimum" value="${g.min}">
    </div>
  </div>
</section>`).join('');
```
